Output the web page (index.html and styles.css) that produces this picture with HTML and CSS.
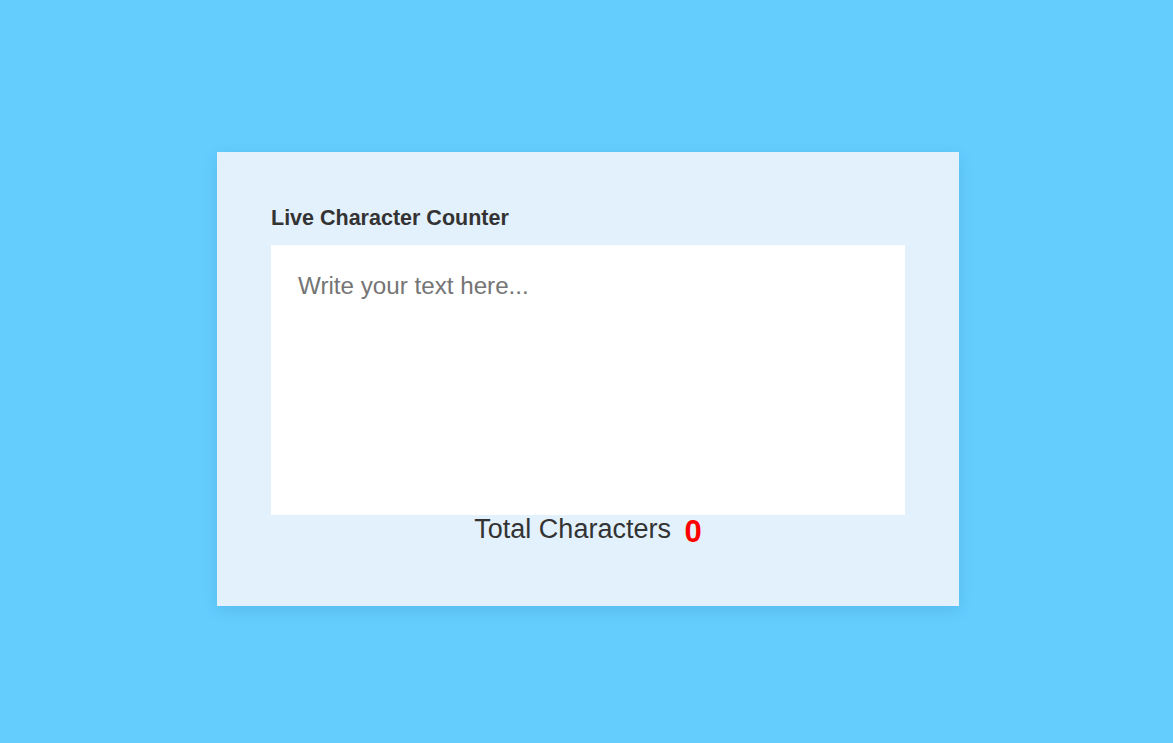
FILE: index.html
```html
<!DOCTYPE html>
<html lang="en">
<head>
<meta charset="utf-8">
<title>Live Character Counter</title>
<link rel="stylesheet" href="styles.css">
</head>
<body>
<div class="card">
  <label class="title" for="text">Live Character Counter</label>
  <textarea id="text" class="input" placeholder="Write your text here..."></textarea>
  <p class="counter">Total Characters <span class="count">0</span></p>
</div>
</body>
</html>
```
FILE: styles.css
```css
html, body {
  height: 100%;
}
body {
  margin: 0;
  background: #64cdfe;
  font-family: "Liberation Sans", Arial, sans-serif;
  display: flex;
  align-items: center;
  justify-content: center;
  padding: 15px 0 0 3px;
  box-sizing: border-box;
}
.card {
  width: 742px;
  height: 454px;
  box-sizing: border-box;
  background: #e3f1fc;
  padding: 54px 54px 0;
  box-shadow: 0 4px 14px rgba(0, 60, 110, 0.12);
}
.title {
  display: block;
  font-size: 21.5px;
  line-height: 25px;
  font-weight: bold;
  color: #333;
  margin-bottom: 14px;
}
.input {
  display: block;
  width: 634px;
  height: 270px;
  box-sizing: border-box;
  border: none;
  outline: none;
  resize: none;
  padding: 27px 27px;
  font-family: "Liberation Sans", Arial, sans-serif;
  font-size: 24.2px;
  background: #fff;
  color: #333;
}
.input::placeholder {
  color: #757575;
}
.counter {
  margin: -1px 0 0;
  text-align: center;
  font-size: 27px;
  color: #333;
}
.count {
  display: inline-block;
  margin-left: 6px;
  font-size: 31px;
  font-weight: bold;
  color: #ff0000;
  vertical-align: -4px;
}
```
